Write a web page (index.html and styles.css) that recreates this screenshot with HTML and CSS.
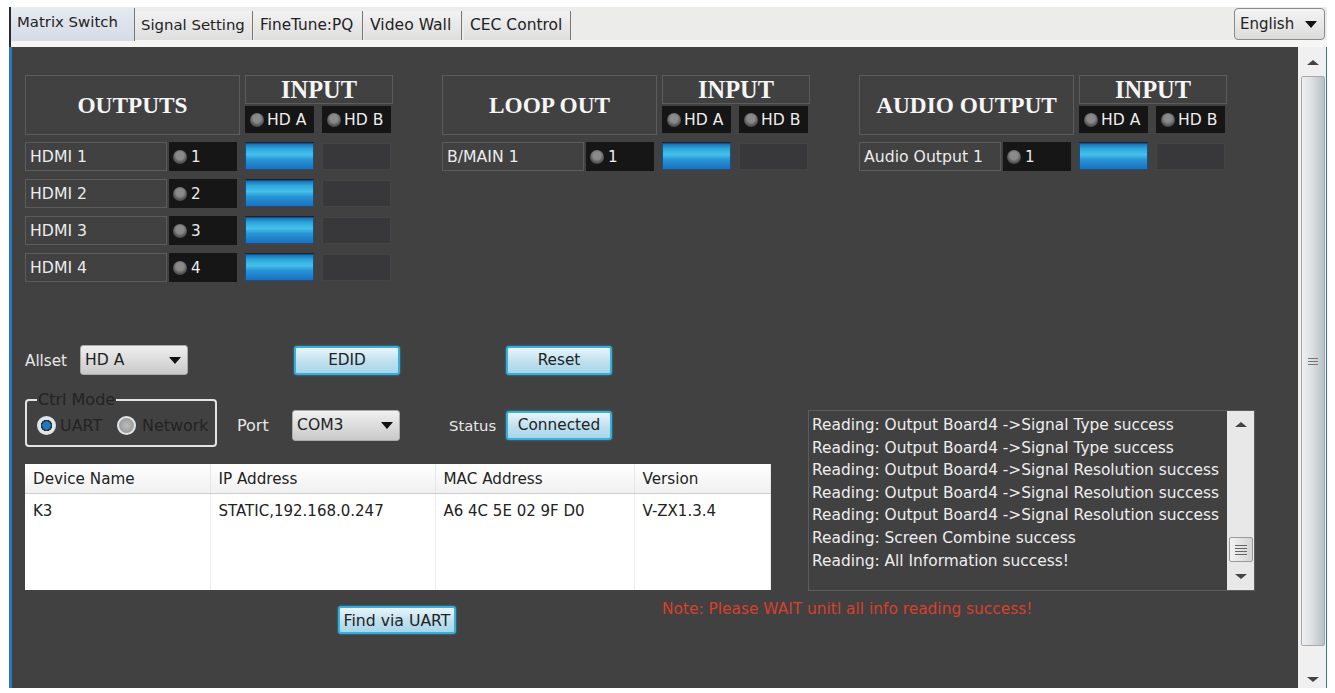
FILE: index.html
```html
<!DOCTYPE html>
<html lang="en">
<head>
<meta charset="utf-8">
<title>Matrix Switch</title>
<link rel="stylesheet" href="styles.css">
</head>
<body>
<div class="app">
  <div class="tabbar">
    <div class="tab tab-active">Matrix Switch</div>
    <div class="tab tab-signal">Signal Setting</div>
    <div class="tab tab-fine">FineTune:PQ</div>
    <div class="tab tab-wall">Video Wall</div>
    <div class="tab tab-cec">CEC Control</div>
    <div class="lang"><span>English</span><i class="tri-down"></i></div>
  </div>
  <div class="workspace">
    <main class="panel">
      <section class="groups">
        <div class="group">
          <div class="title">OUTPUTS</div>
          <div class="input-head">
            <div class="input-title">INPUT</div>
            <div class="chans"><div class="chan"><i class="led"></i>HD A</div><div class="chan"><i class="led"></i>HD B</div></div>
          </div>
          <div class="row"><div class="name">HDMI 1</div><div class="num"><i class="led"></i>1</div></div>
          <div class="picks"><div class="pick on"></div><div class="pick"></div></div>
          <div class="row"><div class="name">HDMI 2</div><div class="num"><i class="led"></i>2</div></div>
          <div class="picks"><div class="pick on"></div><div class="pick"></div></div>
          <div class="row"><div class="name">HDMI 3</div><div class="num"><i class="led"></i>3</div></div>
          <div class="picks"><div class="pick on"></div><div class="pick"></div></div>
          <div class="row"><div class="name">HDMI 4</div><div class="num"><i class="led"></i>4</div></div>
          <div class="picks"><div class="pick on"></div><div class="pick"></div></div>
        </div>
        <div class="group">
          <div class="title">LOOP OUT</div>
          <div class="input-head">
            <div class="input-title">INPUT</div>
            <div class="chans"><div class="chan"><i class="led"></i>HD A</div><div class="chan"><i class="led"></i>HD B</div></div>
          </div>
          <div class="row"><div class="name">B/MAIN 1</div><div class="num"><i class="led"></i>1</div></div>
          <div class="picks"><div class="pick on"></div><div class="pick"></div></div>
        </div>
        <div class="group">
          <div class="title">AUDIO OUTPUT</div>
          <div class="input-head">
            <div class="input-title">INPUT</div>
            <div class="chans"><div class="chan"><i class="led"></i>HD A</div><div class="chan"><i class="led"></i>HD B</div></div>
          </div>
          <div class="row"><div class="name">Audio Output 1</div><div class="num"><i class="led"></i>1</div></div>
          <div class="picks"><div class="pick on"></div><div class="pick"></div></div>
        </div>
      </section>

      <section class="work">
        <div class="controls">
          <div class="line-allset">
            <span class="lbl lbl-allset">Allset</span>
            <div class="select sel-allset"><span>HD A</span><i class="tri-down"></i></div>
            <button class="btn btn-edid">EDID</button>
            <button class="btn btn-reset">Reset</button>
          </div>
          <div class="line-ctrl">
            <fieldset class="mode">
              <legend>Ctrl Mode</legend>
              <span class="radio radio-on"></span><span class="mode-text">UART</span>
              <span class="radio radio-off"></span><span class="mode-text">Network</span>
            </fieldset>
            <span class="lbl lbl-port">Port</span>
            <div class="select sel-port"><span>COM3</span><i class="tri-down"></i></div>
            <span class="lbl lbl-status">Status</span>
            <button class="btn btn-conn">Connected</button>
          </div>
          <table class="devices">
            <thead>
              <tr><th class="c1">Device Name</th><th class="c2">IP Address</th><th class="c3">MAC Address</th><th class="c4">Version</th></tr>
            </thead>
            <tbody>
              <tr><td>K3</td><td>STATIC,192.168.0.247</td><td>A6 4C 5E 02 9F D0</td><td>V-ZX1.3.4</td></tr>
            </tbody>
          </table>
        </div>
        <div class="log">
          <div class="log-text">
            <div>Reading: Output Board4 -&gt;Signal Type success</div>
            <div>Reading: Output Board4 -&gt;Signal Type success</div>
            <div>Reading: Output Board4 -&gt;Signal Resolution success</div>
            <div>Reading: Output Board4 -&gt;Signal Resolution success</div>
            <div>Reading: Output Board4 -&gt;Signal Resolution success</div>
            <div>Reading: Screen Combine success</div>
            <div>Reading: All Information success!</div>
          </div>
          <div class="log-scroll">
            <i class="tri-up"></i>
            <div class="grip"><b></b><b></b><b></b><b></b></div>
            <i class="tri-down-s"></i>
          </div>
        </div>
      </section>

      <section class="foot">
        <button class="btn btn-find">Find via UART</button>
        <span class="note">Note: Please WAIT unitl all info reading success!</span>
      </section>
    </main>
    <aside class="vscroll">
      <i class="tri-up"></i>
      <div class="vthumb"><div class="grip-mini"><b></b><b></b><b></b></div></div>
      <i class="tri-down-s"></i>
    </aside>
  </div>
</div>
</body>
</html>
```
FILE: styles.css
```css
* { box-sizing: border-box; }
html, body { margin: 0; padding: 0; background: #fff; }
body { font-family: "DejaVu Sans", "Noto Sans", sans-serif; font-size: 15.2px; color: #e8e8e8; }
.app { margin: 7px 0 0 9px; width: 1318px; height: 681px; display: flex; flex-direction: column; overflow: hidden; }

.tabbar { height: 40px; flex: none; display: flex; align-items: flex-start; background: linear-gradient(#ececea 0 33px, #f6f6f4 33px); border-left: 2px solid #2a2a2a; color: #222; font-size: 14.9px; }
.tab { height: 29px; margin-top: 4px; padding-left: 6px; line-height: 28px; background: linear-gradient(#f2f2f2, #dfdfdf); border-right: 1px solid #777; white-space: nowrap; }
.tab-active { width: 124px; height: 33px; margin-top: 1px; padding-left: 6px; line-height: 29px; background: linear-gradient(#e6e9f0, #d6dbe6); }
.tab-signal { width: 118px; margin-right: 1px; }
.tab-fine { width: 109px; margin-right: 1px; font-size: 15.3px; }
.tab-wall { width: 98px; margin-right: 2px; font-size: 15.6px; }
.tab-cec { width: 107px; font-size: 15.5px; }
.lang { margin: 1px 2px 0 auto; width: 91px; height: 32px; padding: 0 7px 0 5px; display: flex; align-items: center; justify-content: space-between; border: 1px solid #8a8a8a; border-radius: 4px; background: linear-gradient(#f4f4f4, #dcdcdc); font-size: 15px; }

.tri-down { display: block; width: 0; height: 0; border-left: 6px solid transparent; border-right: 6px solid transparent; border-top: 7px solid #111; }
.tri-up, .tri-down-s { display: block; width: 0; height: 0; border-left: 6px solid transparent; border-right: 6px solid transparent; }
.tri-up { border-bottom: 5px solid #444; }
.tri-down-s { border-top: 5px solid #444; }

.workspace { flex: 1; display: flex; min-height: 0; }
.panel { flex: 1; background: #414142; border-left: 3px solid #2a78b8; padding: 28px 0 0 13px; }

.groups { display: flex; gap: 49px; height: 270px; }
.group { width: 368px; display: grid; grid-template-columns: 215px 148px; grid-template-rows: 59px; grid-auto-rows: 29px; column-gap: 5px; row-gap: 8px; align-content: start; }
.title { height: 60px; padding-top: 1px; border: 1px solid #5c5c5c; display: flex; align-items: center; justify-content: center; font: bold 23.3px "Liberation Serif", serif; color: #f6f6f6; white-space: nowrap; }
.input-head { height: 60px; }
.input-title { height: 29px; border: 1px solid #5c5c5c; text-align: center; font: bold 24.4px/27px "Liberation Serif", serif; color: #f6f6f6; }
.chans { display: flex; gap: 8px; margin-top: 2px; }
.chan { width: 69px; height: 27px; background: #151515; display: flex; align-items: center; padding-left: 5px; gap: 3px; color: #ededed; font-size: 15.6px; white-space: nowrap; }
.led { display: block; flex: none; width: 14px; height: 14px; border-radius: 50%; background: radial-gradient(circle at 50% 40%, #8a8a8a 0 35%, #5b5b5b 60%, #2b2b2b 100%); }
.row { display: flex; gap: 2px; height: 29px; }
.name { width: 142px; border: 1px solid #5c5c5c; padding-left: 4px; line-height: 28px; white-space: nowrap; color: #ececec; font-size: 15.7px; }
.num { width: 68px; background: #161616; display: flex; align-items: center; gap: 4px; padding-left: 4px; color: #ededed; }
.picks { display: flex; gap: 8px; align-items: center; }
.pick { width: 69px; height: 27px; background: #38383a; border: 1px solid #444445; }
.pick.on { background: linear-gradient(#1f6fb5 0, #2aa6dc 18%, #46c0e8 42%, #2796d6 62%, #1a70c0 100%); border: 1px solid #174f8a; box-shadow: 0 -1px 0 #222; }

.work { display: flex; }
.controls { width: 745px; }
.lbl { color: #e8e8e8; }
.lbl-allset { width: 55px; padding-top: 1px; }
.line-allset { display: flex; align-items: center; height: 30px; }
.select { height: 30px; width: 108px; display: flex; align-items: center; justify-content: space-between; padding: 0 6px 0 4px; border: 1px solid #aaa; border-radius: 3px; background: linear-gradient(#f0f0f0, #c9c9c9); color: #222; font-size: 15.6px; }
.btn { display: block; padding: 0; font: 15.3px "DejaVu Sans", sans-serif; color: #222; border: 2px solid #35b0dc; border-radius: 3px; background: linear-gradient(#e8f5fb, #bfe0ee 55%, #a8d6ea); box-shadow: 0 0 2px #2f9fd0; }
.btn-edid { width: 106px; height: 29px; margin-left: 106px; }
.btn-reset { width: 106px; height: 29px; margin-left: 106px; }
.line-ctrl { display: flex; align-items: center; height: 54px; padding-top: 10px; margin-top: 18px; }
.mode { margin: -10px 0 0; align-self: flex-start; flex: none; width: 192px; height: 54px; padding: 0 0 0 10px; border: 2px solid #e4e4e4; border-radius: 4px; display: flex; align-items: center; color: #232323; }
.mode legend { padding: 0 1px; font-size: 16px; line-height: 13px; color: #232323; }
.mode-text { font-size: 15.9px; color: #232323; white-space: nowrap; }
.radio { display: block; flex: none; width: 19px; height: 19px; border-radius: 50%; border: 2px solid #dfe6ea; margin-right: 4px; background: #9a9a9a; }
.radio-on { background: radial-gradient(circle, #1f78bc 0 38%, #2a2f36 42% 52%, #dfe6ea 56%); }
.radio-off { margin-left: 15px; margin-right: 6px; background: radial-gradient(circle, #bdbdbd, #8e8e8e); }
.lbl-port { width: 55px; margin-left: 20px; font-size: 16px; }
.sel-port { flex: none; width: 108px; height: 31px; }
.lbl-status { width: 57px; margin-left: 49px; font-size: 14.8px; }
.btn-conn { flex: none; width: 106px; height: 29px; }

.devices { display: table; width: 745px; height: 126px; margin-top: 17px; border-collapse: collapse; table-layout: fixed; background: #fff; color: #222; font-size: 15.2px; }
.devices th { height: 29px; padding: 2px 0 0 8px; font-weight: normal; text-align: left; background: linear-gradient(#fff, #f0f0f0); border-bottom: 1px solid #ccc; border-right: 1px solid #e6e6e6; white-space: nowrap; }
.devices td { padding: 8px 0 0 8px; vertical-align: top; border-right: 1px solid #ececec; white-space: nowrap; font-size: 15px; }
.c1 { width: 185px; }
.c2 { width: 225px; }
.c3 { width: 199px; }
.c4 { width: 136px; }

.log { width: 447px; height: 181px; margin: 65px 0 0 38px; display: flex; border: 1px solid #5c5c5c; }
.log-text { flex: 1; padding: 3px 0 0 3px; font-size: 15.4px; line-height: 22.6px; color: #eeeeee; white-space: nowrap; }
.log-scroll { width: 27px; background: #e8e8e8; display: flex; flex-direction: column; align-items: center; padding-top: 11px; }
.grip { width: 24px; height: 25px; margin-top: 110px; margin-bottom: 12px; background: linear-gradient(90deg, #f2f2f2, #d4d4d4); border: 1px solid #9a9a9a; border-radius: 2px; display: flex; flex-direction: column; align-items: center; justify-content: center; gap: 2px; }
.grip b { display: block; width: 12px; height: 1px; background: #666; }

.foot { display: flex; align-items: center; height: 28px; margin-top: 15px; }
.btn-find { width: 118px; height: 28px; margin-left: 313px; font-size: 15.7px; white-space: nowrap; }
.note { margin-left: 206px; color: #d8402c; font-size: 15.4px; position: relative; top: -11px; white-space: nowrap; }

.vscroll { width: 29px; flex: none; background: #f0f0f0; display: flex; flex-direction: column; align-items: center; padding: 13px 2px 0 3px; border-right: 1px solid #2a78b8; }
.vthumb { width: 24px; height: 570px; margin: 11px 0 31px; background: linear-gradient(90deg, #eef0f2, #dfe2e5 40%, #b9c0c6); border: 1px solid #a8a8a8; border-radius: 2px; display: flex; align-items: center; justify-content: center; }
.grip-mini { display: flex; flex-direction: column; gap: 2px; }
.grip-mini b { display: block; width: 10px; height: 1px; background: #777; }
```
